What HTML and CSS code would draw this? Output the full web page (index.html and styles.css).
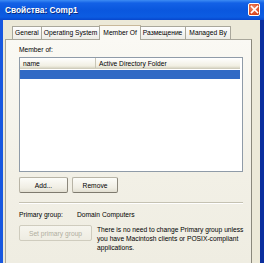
FILE: index.html
```html
<!DOCTYPE html>
<html>
<head>
<meta charset="utf-8">
<link rel="stylesheet" href="styles.css">
</head>
<body>
<div class="window">
  <div class="titlebar">
    <span class="title">Свойства: Comp1</span>
    <span class="close"><svg width="9" height="9" viewBox="0 0 9 9"><path d="M1.5 1.5 L7.5 7.5 M7.5 1.5 L1.5 7.5" stroke="#fff" stroke-width="1.6" stroke-linecap="square"/></svg></span>
  </div>
  <div class="frame">
    <div class="tabs">
      <span class="tab">General</span>
      <span class="tab">Operating System</span>
      <span class="tab active">Member Of</span>
      <span class="tab">Размещение</span>
      <span class="tab">Managed By</span>
    </div>
    <div class="panel">
      <div class="label">Member of:</div>
      <div class="list">
        <div class="list-head">
          <span class="col-name">name</span>
          <span class="col-folder">Active Directory Folder</span>
        </div>
        <div class="row-sel"></div>
      </div>
      <div class="btns">
        <span class="btn btn-add">Add...</span>
        <span class="btn btn-remove">Remove</span>
      </div>
      <div class="sep"></div>
      <div class="pg">
        <span class="pg-label">Primary group:</span>
        <span>Domain Computers</span>
      </div>
      <div class="pg-row">
        <span class="btn btn-set disabled">Set primary group</span>
        <p class="note">There is no need to change Primary group unless you have Macintosh clients or POSIX-compliant applications.</p>
      </div>
    </div>
  </div>
</div>
</body>
</html>
```
FILE: styles.css
```css
* { box-sizing: border-box; }
html, body { margin: 0; padding: 0; }
body {
  width: 264px;
  height: 263px;
  overflow: hidden;
  font-family: "Liberation Sans", Arial, sans-serif;
  font-size: 6.7px;
  color: #000;
}
.window {
  width: 264px;
  height: 263px;
  display: flex;
  flex-direction: column;
  background: #0B4ED8;
}
.titlebar {
  height: 20px;
  flex: none;
  display: flex;
  align-items: center;
  justify-content: space-between;
  padding: 0 4px 0 5px;
  background: linear-gradient(#3D8CF4 0, #1361E6 3px, #0A57DE 50%, #0C5CE2 85%, #0746CC 100%);
}
.title {
  color: #fff;
  font-weight: bold;
  font-size: 8.3px;
  text-shadow: 1px 1px 0 #0A2C80;
}
.close {
  width: 12px;
  height: 13px;
  border: 1px solid #fff;
  border-radius: 2px;
  background: radial-gradient(circle at 40% 35%, #F08A68, #D9461E 70%, #C23A14);
  display: flex;
  align-items: center;
  justify-content: center;
  margin-top: -1px;
}
.frame {
  flex: 1;
  background: #ECE9D8;
  border-left: 3px solid #1858E0;
  border-right: 4px solid #0A2E9E;
  padding: 6px 8px 0 2px;
  display: flex;
  flex-direction: column;
  min-height: 0;
}
.tabs {
  display: flex;
  height: 13px;
  padding-left: 7px;
  align-items: flex-end;
  position: relative;
  z-index: 1;
}
.tab {
  height: 13px;
  padding: 0 2px 0 2px;
  line-height: 12px;
  border: 1px solid #A9A79B;
  border-bottom: none;
  border-left: none;
  background: linear-gradient(#FEFEFE, #EDECE6);
  white-space: nowrap;
}
.tab:first-child { border-left: 1px solid #A9A79B; }
.tab.active {
  height: 15px;
  margin: 0 -1px 0 -1px;
  padding: 0 3px;
  border-left: 1px solid #A9A79B;
  border-top: 1px solid #C8B89A;
  background: #FAF9F4;
  line-height: 13px;
  position: relative;
  top: 1px;
}
.tab.active + .tab { border-left: none; padding-left: 3px; padding-right: 3px; }
.tab.active + .tab + .tab { padding-left: 3px; padding-right: 3px; }
.panel {
  flex: 1;
  border: 1px solid #A9A79B;
  border-right-color: #8A887C;
  border-bottom: none;
  background: linear-gradient(#FAF9F4, #F2F0E6 60%, #EFEDE2);
  padding: 5px 8px 0 13px;
  display: flex;
  flex-direction: column;
}
.label {
  line-height: 9px;
  height: 9px;
}
.list {
  margin-top: 3px;
  height: 115px;
  border: 1px solid #8F9BA8;
  background: #fff;
  padding-right: 2px;
}
.list-head {
  display: flex;
  height: 11px;
  line-height: 11px;
  background: linear-gradient(#FFFFFF, #F1EFE2 80%, #D8D5C4);
  border-bottom: 1px solid #D0CDBC;
}
.col-name {
  width: 76px;
  padding-left: 3px;
  border-right: 1px solid #C9C6B6;
}
.col-folder {
  padding-left: 3px;
}
.row-sel {
  height: 9px;
  margin-top: 1px;
  background: #316AC5;
}
.btns {
  display: flex;
  gap: 4px;
  margin-top: 5px;
}
.btn {
  display: flex;
  align-items: center;
  justify-content: center;
  height: 16px;
  border: 1px solid #B8B4A6;
  border-right-color: #8C887C;
  border-bottom-color: #7E7A6E;
  border-radius: 2px;
  background: linear-gradient(#FCFCF8, #F0EEE4 70%, #E2DFD2);
  white-space: nowrap;
}
.btn-add { width: 49px; }
.btn-remove { width: 46px; }
.sep {
  margin-top: 9px;
  height: 2px;
  border-top: 1px solid #C5C2B2;
  border-bottom: 1px solid #FFFFFF;
}
.pg {
  display: flex;
  margin-top: 6px;
  line-height: 9px;
}
.pg-label { width: 58px; }
.pg-row {
  display: flex;
  margin-top: 6px;
  align-items: flex-start;
}
.btn-set {
  width: 73px;
  flex: none;
  color: #B0AE9E;
  border-color: #CFCCBE;
  background: linear-gradient(#F6F5EE, #EEECE2);
}
.note {
  flex: none;
  margin: 0 0 0 5px;
  line-height: 9px;
  width: 156px;
}
```
